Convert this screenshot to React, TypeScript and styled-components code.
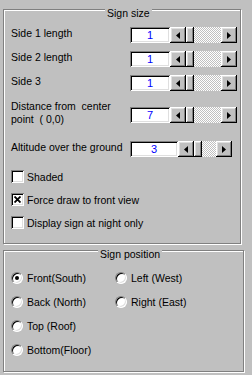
import React from 'react'
import styled, { createGlobalStyle } from 'styled-components'

const GlobalStyle = createGlobalStyle`
  html, body {
    margin: 0;
    padding: 0;
    background: #c0c0c0;
  }

  body {
    font-family: "Liberation Sans", Arial, sans-serif;
    font-size: 10.5px;
    color: #000;
  }
`

const raised = `
  box-shadow:
    inset -1px -1px 0 #000,
    inset 1px 1px 0 #fff,
    inset -2px -2px 0 #808080,
    inset 2px 2px 0 #dfdfdf;
`

const sunken = `
  box-shadow:
    inset 1px 1px 0 #808080,
    inset -1px -1px 0 #fff,
    inset 2px 2px 0 #000,
    inset -2px -2px 0 #dfdfdf;
`

const Page = styled.div`
  width: 252px;
  height: 375px;
  overflow: hidden;
  box-sizing: border-box;
  padding: 9px 0 0 3px;
  display: flex;
  flex-direction: column;
  align-items: flex-start;
`

const Group = styled.div<{ $width: number; $height: number; $padTop: number }>`
  position: relative;
  box-sizing: border-box;
  width: ${p => p.$width}px;
  height: ${p => p.$height}px;
  border: 1px solid #808080;
  box-shadow: 1px 1px 0 #fff, inset 1px 1px 0 #fff;
  padding: ${p => p.$padTop}px 0 0 7px;
  display: flex;
  flex-direction: column;

  & + & {
    margin-top: 6px;
  }
`

const Legend = styled.div<{ $left: number }>`
  position: absolute;
  top: -3px;
  left: ${p => p.$left}px;
  padding: 0 2px;
  line-height: 12px;
  background: #c0c0c0;
  white-space: nowrap;
`

const Row = styled.div<{ $mt?: number }>`
  display: flex;
  align-items: flex-start;
  margin-top: ${p => p.$mt ?? 0}px;
`

const Label = styled.div<{ $lh?: number }>`
  width: 119px;
  flex-shrink: 0;
  line-height: ${p => p.$lh ?? 12}px;
  white-space: pre;
`

const Controls = styled.div<{ $offset?: number }>`
  display: flex;
  margin-top: ${p => p.$offset ?? 0}px;
`

const Edit = styled.div<{ $width: number }>`
  box-sizing: border-box;
  width: ${p => p.$width}px;
  height: 16px;
  background: #fff;
  ${sunken}
  color: #0000ff;
  font-size: 11px;
  display: flex;
  align-items: center;
  justify-content: center;
`

const ScrollBar = styled.div<{ $width: number }>`
  display: flex;
  width: ${p => p.$width}px;
  height: 16px;
`

const ArrowButton = styled.div`
  width: 16px;
  height: 16px;
  flex-shrink: 0;
  background: #c0c0c0;
  ${raised}
  display: flex;
  align-items: center;
  justify-content: center;
`

const Thumb = styled.div`
  width: 8px;
  height: 16px;
  flex-shrink: 0;
  background: #c0c0c0;
  ${raised}
`

const Track = styled.div`
  flex: 1;
  background: repeating-conic-gradient(#c0c0c0 0% 25%, #fff 0% 50%) 0 0 / 2px 2px;
`

const CheckRow = styled.div<{ $mt: number }>`
  display: flex;
  align-items: center;
  gap: 3px;
  margin-top: ${p => p.$mt}px;
  line-height: 12px;
`

const CheckBox = styled.div`
  width: 13px;
  height: 13px;
  flex-shrink: 0;
  background: #fff;
  ${sunken}
  display: flex;
  align-items: center;
  justify-content: center;
`

const RadioGrid = styled.div`
  display: grid;
  grid-template-columns: 104px auto;
  grid-auto-rows: 12px;
  row-gap: 12px;
`

const RadioItem = styled.div`
  display: flex;
  align-items: center;
  gap: 4px;
  line-height: 12px;
  white-space: nowrap;
`

const RadioCircle = styled.div`
  box-sizing: border-box;
  width: 12px;
  height: 12px;
  flex-shrink: 0;
  border-radius: 50%;
  background: #fff;
  border: 1px solid;
  border-color: #808080 #fff #fff #808080;
  box-shadow: inset 1px 1px 0 #000, inset -1px -1px 0 #dfdfdf;
  display: flex;
  align-items: center;
  justify-content: center;
`

const Dot = styled.div`
  width: 4px;
  height: 4px;
  border-radius: 50%;
  background: #000;
`

const Arrow = ({ dir }: { dir: 'left' | 'right' }) => (
  <svg width="4" height="7" viewBox="0 0 4 7">
    {dir === 'left'
      ? <polygon points="4,0 4,7 0,3.5" fill="#000" />
      : <polygon points="0,0 0,7 4,3.5" fill="#000" />}
  </svg>
)

const Spinner = ({
  value,
  editWidth,
  barWidth,
}: {
  value: number
  editWidth: number
  barWidth: number
}) => (
  <>
    <Edit $width={editWidth}>{value}</Edit>
    <ScrollBar $width={barWidth}>
      <ArrowButton><Arrow dir="left" /></ArrowButton>
      <Thumb />
      <Track />
      <ArrowButton><Arrow dir="right" /></ArrowButton>
    </ScrollBar>
  </>
)

const Check = ({ checked, label, mt }: { checked?: boolean; label: string; mt: number }) => (
  <CheckRow $mt={mt}>
    <CheckBox>
      {checked && (
        <svg width="7" height="7" viewBox="0 0 7 7">
          <path d="M0.5 0.5 L6.5 6.5 M6.5 0.5 L0.5 6.5" stroke="#000" strokeWidth="1.8" />
        </svg>
      )}
    </CheckBox>
    <span>{label}</span>
  </CheckRow>
)

const Radio = ({ checked, label }: { checked?: boolean; label: string }) => (
  <RadioItem>
    <RadioCircle>{checked && <Dot />}</RadioCircle>
    <span>{label}</span>
  </RadioItem>
)

const sides = [
  { label: 'Side 1 length', value: 1 },
  { label: 'Side 2 length', value: 1 },
  { label: 'Side 3', value: 1 },
]

const App = () => {
  return (
    <Page>
      <GlobalStyle />

      <Group $width={238} $height={235} $padTop={17}>
        <Legend $left={101}>Sign size</Legend>

        {sides.map((side, i) => (
          <Row key={side.label} $mt={i === 0 ? 0 : 8}>
            <Label>{side.label}</Label>
            <Controls>
              <Spinner value={side.value} editWidth={40} barWidth={67} />
            </Controls>
          </Row>
        ))}

        <Row $mt={9}>
          <Label $lh={13}>{'Distance from  center\npoint  ( 0,0)'}</Label>
          <Controls $offset={7}>
            <Spinner value={7} editWidth={40} barWidth={67} />
          </Controls>
        </Row>

        <Row $mt={15}>
          <Label>Altitude over the ground</Label>
          <Controls>
            <Spinner value={3} editWidth={48} barWidth={54} />
          </Controls>
        </Row>

        <Check label="Shaded" mt={13} />
        <Check checked label="Force draw to front view" mt={10} />
        <Check label="Display sign at night only" mt={10} />
      </Group>

      <Group $width={241} $height={122} $padTop={21}>
        <Legend $left={94}>Sign position</Legend>

        <RadioGrid>
          <Radio checked label="Front(South)" />
          <Radio label="Left (West)" />
          <Radio label="Back (North)" />
          <Radio label="Right (East)" />
          <Radio label="Top (Roof)" />
          <span />
          <Radio label="Bottom(Floor)" />
        </RadioGrid>
      </Group>
    </Page>
  )
}

export default App
